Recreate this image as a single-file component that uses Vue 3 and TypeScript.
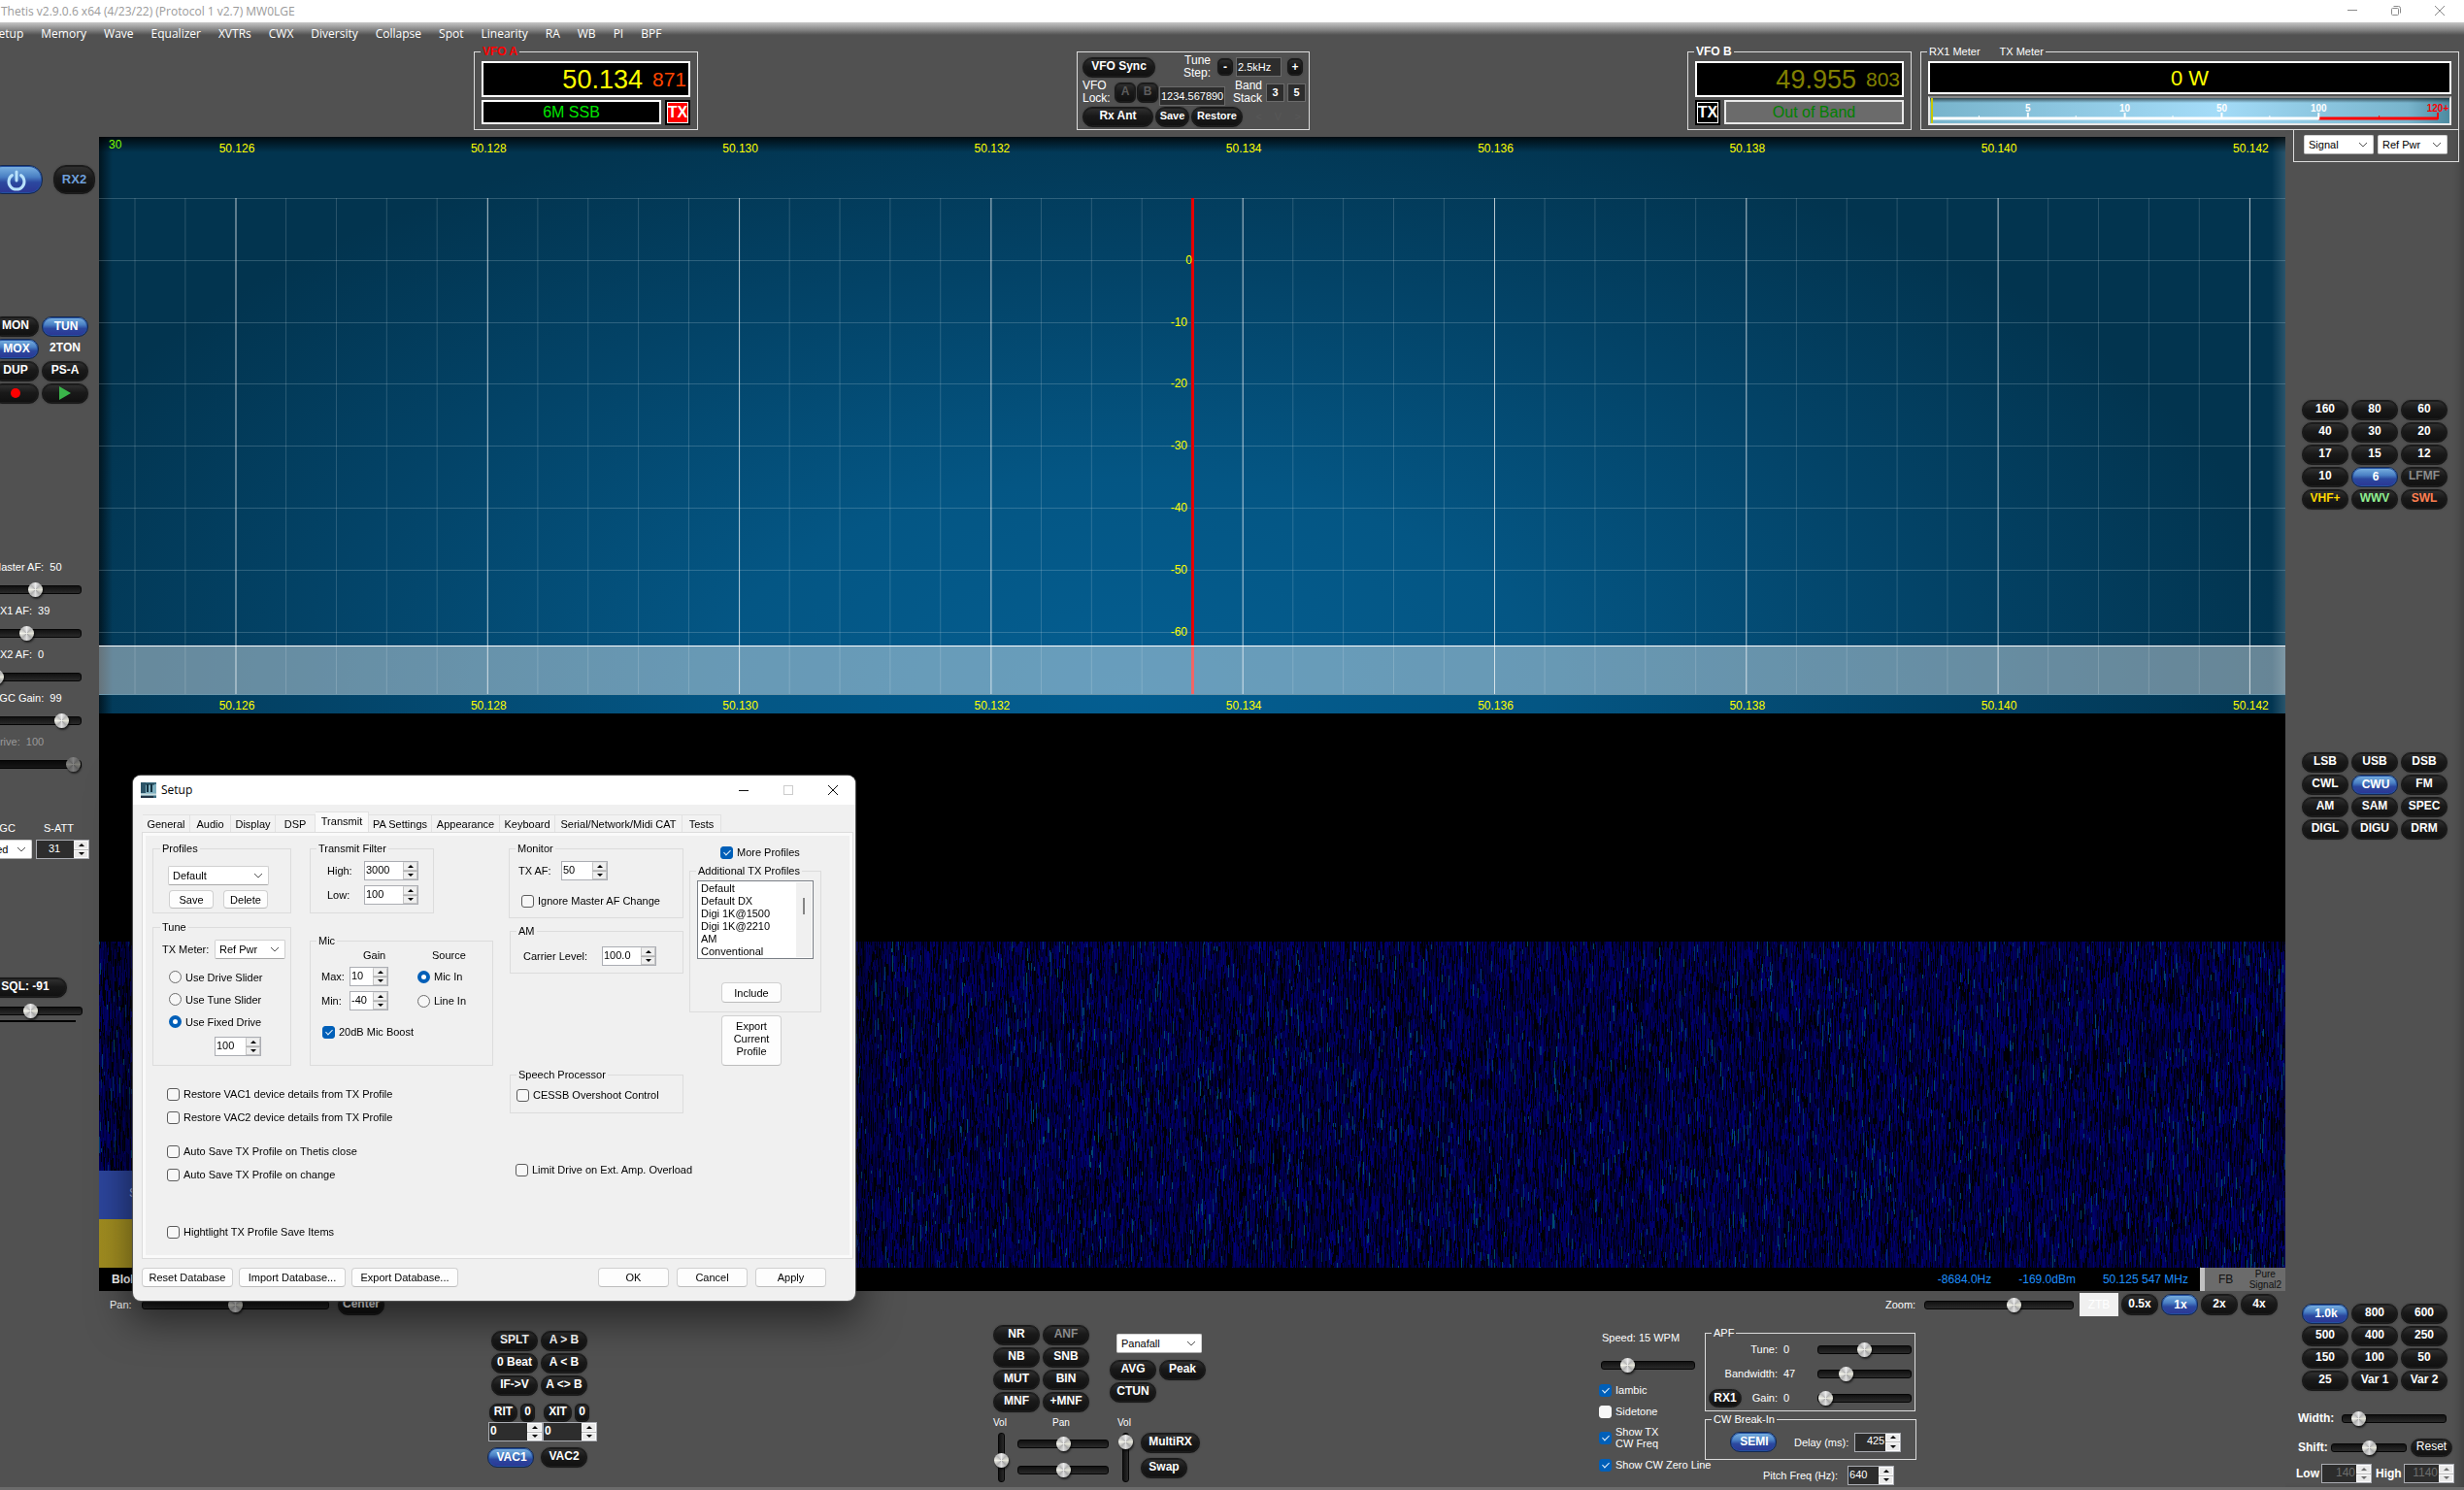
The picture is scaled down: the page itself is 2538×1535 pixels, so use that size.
<script setup lang="ts">
import { h, onMounted, ref } from 'vue'

interface SpinProps { value: string; label: string; off?: boolean }
interface ComboProps { value: string; label: string }
interface Key { t: string; c?: string }

const arrow = (d: string) =>
  h('svg', { viewBox: '0 0 8 5', width: 8, height: 5 }, [h('path', { d, fill: 'currentColor' })])

/* Numeric box with up and down buttons */
const Spin = (p: SpinProps) =>
  h('span', { class: ['spin', { off: p.off }] }, [
    h('input', { type: 'text', value: p.value, 'aria-label': p.label, disabled: p.off }),
    h('span', { class: 'ud' }, [
      h('button', { type: 'button', 'aria-label': p.label + ' up' }, [arrow('M1 4h6L4 1z')]),
      h('button', { type: 'button', 'aria-label': p.label + ' down' }, [arrow('M1 1h6L4 4z')]),
    ]),
  ])
Spin.props = { value: String, label: String, off: Boolean }

/* Drop-down with a thin chevron */
const Combo = (p: ComboProps) =>
  h('span', { class: 'combo' }, [
    h('select', { 'aria-label': p.label }, [h('option', p.value)]),
    h('svg', { viewBox: '0 0 10 6', width: 10, height: 6 }, [
      h('path', { d: 'M1 1l4 4 4-4', fill: 'none', stroke: '#555', 'stroke-width': 1 }),
    ]),
  ])
Combo.props = { value: String, label: String }

const menu = ['Setup', 'Memory', 'Wave', 'Equalizer', 'XVTRs', 'CWX', 'Diversity', 'Collapse', 'Spot', 'Linearity', 'RA', 'WB', 'PI', 'BPF']
const k = (...t: string[]): Key[] => t.map((s) => { const [a, c] = s.split('|'); return { t: a, c } })
const bands = k('160', '80', '60', '40', '30', '20', '17', '15', '12', '10', '6|on', 'LFMF|dim', 'VHF+|gold', 'WWV|green', 'SWL|coral')
const modes = k('LSB', 'USB', 'DSB', 'CWL', 'CWU|on', 'FM', 'AM', 'SAM', 'SPEC', 'DIGL', 'DIGU', 'DRM')
const filters = k('1.0k|on', '800', '600', '500', '400', '250', '150', '100', '50', '25', 'Var 1', 'Var 2')
const dsp = k('NR', 'ANF|dim', 'NB', 'SNB', 'MUT', 'BIN', 'MNF', '+MNF')
const vfoKeys = k('SPLT', 'A > B', '0 Beat', 'A < B', 'IF->V', 'A <> B')
const zooms = k('0.5x', '1x|on', '2x', '4x')

const gains = [
  { t: 'Master AF:  50', v: 50 },
  { t: 'RX1 AF:  39', v: 39 },
  { t: 'RX2 AF:  0', v: 0 },
  { t: 'AGC Gain:  99', v: 85 },
  { t: 'Drive:  100', v: 100, off: true },
]

const tabs = [
  { t: 'General', w: 49 }, { t: 'Audio', w: 42 }, { t: 'Display', w: 46 }, { t: 'DSP', w: 41 },
  { t: 'Transmit', w: 55 }, { t: 'PA Settings', w: 65 }, { t: 'Appearance', w: 70 },
  { t: 'Keyboard', w: 57 }, { t: 'Serial/Network/Midi CAT', w: 131 }, { t: 'Tests', w: 40 },
]
const profiles = ['Default', 'Default DX', 'Digi 1K@1500', 'Digi 1K@2210', 'AM', 'Conventional']

/* Horizontal positions as shares of the display's width */
const span = 2252
const pct = (x: number) => (x / span) * 100 + '%'
const majors = Array.from({ length: 9 }, (_, i) => ({ x: 141 + i * 259.3, t: (50.126 + i * 0.002).toFixed(3) }))
const minors = Array.from({ length: 44 }, (_, i) => 37 + i * 51.86).filter((_, i) => (i - 2) % 5 !== 0)
const rows = Array.from({ length: 8 }, (_, i) => 63 + Math.round(i * 63.8))
const levels = [
  { t: '0', x: 1126 }, { t: '-10', x: 1121 }, { t: '-20', x: 1121 }, { t: '-30', x: 1121 },
  { t: '-40', x: 1121 }, { t: '-50', x: 1121 }, { t: '-60', x: 1121 },
]

const meter = [
  { x: 101, t: '5' }, { x: 201, t: '10' }, { x: 301, t: '50' }, { x: 401, t: '100' },
]

const fall = ref<HTMLCanvasElement | null>(null)
const list = ref<HTMLSelectElement | null>(null)

/* Small seeded generator, so the noise floor is the same at each load */
function generator(seed: number) {
  let a = seed
  return () => {
    a = (a + 0x6d2b79f5) | 0
    let t = Math.imul(a ^ (a >>> 15), 1 | a)
    t = (t + Math.imul(t ^ (t >>> 7), 61 | t)) ^ t
    return ((t ^ (t >>> 14)) >>> 0) / 4294967296
  }
}

onMounted(() => {
  if (list.value) list.value.selectedIndex = -1
  const c = fall.value
  if (!c) return
  c.width = c.clientWidth
  c.height = c.clientHeight
  const g = c.getContext('2d')
  if (!g) return
  const rnd = generator(7)
  for (let x = 0; x < c.width; x++) {
    let y = -Math.floor(rnd() * 12)
    while (y < c.height) {
      const len = 3 + Math.floor(rnd() * 15)
      const r = rnd()
      if (r < 0.24) g.fillStyle = '#000006'
      else if (r < 0.965) g.fillStyle = `rgb(0,0,${Math.floor(36 + rnd() * 82)})`
      else g.fillStyle = `rgb(0,${Math.floor(34 + rnd() * 46)},${Math.floor(95 + rnd() * 30)})`
      g.fillRect(x, y, 1, len)
      y += len
    }
  }
})
</script>

<template>
  <div class="app">
    <header class="title">
      <span>Thetis v2.9.0.6 x64 (4/23/22) (Protocol 1 v2.7) MW0LGE</span>
      <div class="winbtns">
        <button type="button" aria-label="Minimize"><svg width="12" height="12"><path d="M1 5.500h10" /></svg></button>
        <button type="button" aria-label="Restore"><svg width="12" height="12"><rect x="1.500" y="3.500" width="7" height="7" rx="1" /><path d="M3.500 1.500h5a2 2 0 0 1 2 2v5" /></svg></button>
        <button type="button" aria-label="Close"><svg width="12" height="12"><path d="M1 1l10 10M11 1L1 11" /></svg></button>
      </div>
    </header>

    <nav class="menu"><a v-for="m in menu" :key="m" href="#">{{ m }}</a></nav>

    <div class="top">
      <i class="s1"></i>
      <fieldset class="vfo">
        <legend class="red">VFO A</legend>
        <div class="lcd"><b class="mhz yellow">50.134</b><b class="hz orange">871</b></div>
        <div class="sub"><div class="band">6M SSB</div><button type="button" class="tx hot">TX</button></div>
      </fieldset>
      <i class="s2"></i>
      <div class="sync">
        <div class="row">
          <button type="button" class="pill w75">VFO Sync</button>
          <span class="two right-t">Tune<br>Step:</span>
          <button type="button" class="pill small" aria-label="Step down">-</button>
          <input class="dark step" type="text" value="2.5kHz" aria-label="Tune step">
          <button type="button" class="pill small" aria-label="Step up">+</button>
        </div>
        <div class="row mid">
          <span class="two">VFO<br>Lock:</span>
          <button type="button" class="pill lock">A</button><button type="button" class="pill lock">B</button>
          <input class="dark freq" type="text" value="1234.567890" aria-label="Saved frequency">
          <span class="two right-t stack">Band<br>Stack</span>
          <button type="button" class="dark num">3</button><button type="button" class="dark num">5</button>
        </div>
        <div class="row low">
          <button type="button" class="pill w73">Rx Ant</button>
          <button type="button" class="pill w35 f11">Save</button>
          <button type="button" class="pill w53 f11">Restore</button>
          <span class="ghost">&lt;</span><span class="ghost">V</span><span class="ghost">&gt;</span>
        </div>
      </div>
      <i class="s3"></i>
      <fieldset class="vfo">
        <legend>VFO B</legend>
        <div class="lcd"><b class="mhz olive">49.955</b><b class="hz olive">803</b></div>
        <div class="sub"><button type="button" class="tx">TX</button><div class="band out">Out of Band</div></div>
      </fieldset>
      <fieldset class="meter">
        <legend><span>RX1 Meter</span><span>TX Meter</span></legend>
        <div class="watt">0 W</div>
        <div class="scale">
          <svg width="100%" height="26" viewBox="0 0 536 26" preserveAspectRatio="none">
            <path d="M2 0v26" stroke="#c8c800" stroke-width="2" />
            <path d="M3 21h399" stroke="#fff" stroke-width="3" />
            <path d="M401 21h123" stroke="#f00" stroke-width="3" />
            <path d="M101 15v7M201 15v7M301 15v7M401 15v7" stroke="#fff" stroke-width="2" />
            <path d="M50.500 18v4M150.500 18v4M250.500 18v4M350.500 18v4" stroke="#fff" />
            <path d="M524 15v7" stroke="#f00" stroke-width="2" /><path d="M463.500 18v4" stroke="#f00" />
            <text v-for="m in meter" :key="m.t" :x="m.x" y="14" fill="#fff">{{ m.t }}</text>
            <text x="524" y="14" fill="#f00">120+</text>
          </svg>
        </div>
      </fieldset>
    </div>

    <main class="main">
      <aside class="left">
        <div class="power">
          <button type="button" class="pill on pw" aria-label="Power">
            <svg width="24" height="24" viewBox="0 0 24 24" fill="none" stroke="#b9e2fb" stroke-width="3" stroke-linecap="round"><path d="M12 3v9" /><path d="M7.500 6.500a8 8 0 1 0 9 0" /></svg>
          </button>
          <button type="button" class="pill rx2">RX2</button>
        </div>
        <div class="grid2 tx-keys">
          <button type="button" class="pill">MON</button><button type="button" class="pill on">TUN</button>
          <button type="button" class="pill on">MOX</button><button type="button" class="pill bare">2TON</button>
          <button type="button" class="pill">DUP</button><button type="button" class="pill">PS-A</button>
          <button type="button" class="pill" aria-label="Record"><svg width="12" height="12"><circle cx="6" cy="6" r="5" fill="#f00" /></svg></button>
          <button type="button" class="pill" aria-label="Play"><svg width="14" height="14"><path d="M1 0l12 7-12 7z" fill="#3ab54a" /></svg></button>
        </div>
        <label v-for="g in gains" :key="g.t" class="gain" :class="{ off: g.off }">
          <span>{{ g.t }}</span><input type="range" class="rng" step="any" :value="g.v">
        </label>
        <div class="att">
          <div class="agc"><span>AGC</span><Combo value="Med" label="AGC" /></div>
          <div class="satt"><span>S-ATT</span><Spin value="31" label="S-ATT" class="night mid31" /></div>
        </div>
        <button type="button" class="pill sql">SQL: -91</button>
        <input type="range" class="rng sqlr" step="any" value="44" aria-label="Squelch">
        <div class="bar"></div>
      </aside>

      <section class="center">
        <div class="pan">
          <svg width="100%" height="594">
            <line v-for="x in minors" :key="x" :x1="pct(x)" :x2="pct(x)" y1="63" y2="574" stroke="#fff" stroke-opacity=".17" />
            <line v-for="y in rows" :key="y" x1="0" x2="100%" :y1="y + 0.5" :y2="y + 0.5" stroke="#c8e0ea" stroke-opacity=".22" />
            <line v-for="m in majors" :key="m.t" :x1="pct(m.x)" :x2="pct(m.x)" y1="63" y2="574" stroke="#fff" stroke-opacity=".72" />
            <line :x1="pct(1126.5)" :x2="pct(1126.5)" y1="63" y2="574" stroke="#e60000" stroke-width="3" />
            <rect x="0" y="524" width="100%" height="50" fill="#fff" fill-opacity=".4" />
            <line x1="0" x2="100%" y1="524.5" y2="524.5" stroke="#fff" />
            <line x1="0" x2="100%" y1="574.5" y2="574.5" stroke="#6c96ab" />
            <text v-for="m in majors" :key="m.t" :x="pct(m.x + 1)" y="16" text-anchor="middle">{{ m.t }}</text>
            <text v-for="m in majors" :key="m.t" :x="pct(m.x + 1)" y="590" text-anchor="middle">{{ m.t }}</text>
            <text v-for="(l, i) in levels" :key="l.t" :x="pct(l.x)" :y="rows[i + 1] + 4" text-anchor="end">{{ l.t }}</text>
            <text x="10" y="12" class="thirty">30</text>
          </svg>
        </div>
        <div class="falls">
          <canvas ref="fall"></canvas>
          <div class="spots"><div class="blue">S9</div><div class="gold-b"></div></div>
        </div>
        <div class="status">
          <b>Blobs</b>
          <span class="read">-8684.0Hz</span><span class="read">-169.0dBm</span><span class="read">50.125 547 MHz</span>
          <div class="fb"><span>FB</span><span class="pure">Pure<br>Signal2</span></div>
        </div>
        <div class="zoomrow">
          <label class="lab"><span class="pl">Pan:</span><input type="range" class="rng panr" step="any" value="50"></label>
          <button type="button" class="pill ctr">Center</button>
          <label class="lab zl"><span class="zt">Zoom:</span><input type="range" class="rng zr" step="any" value="61"></label>
          <button type="button" class="ztb">ZTB</button>
          <div class="zkeys"><button v-for="z in zooms" :key="z.t" type="button" class="pill" :class="z.c">{{ z.t }}</button></div>
        </div>

        <div class="ctl">
          <i class="c1"></i>
          <div class="ga">
            <div class="grid2"><button v-for="b in vfoKeys" :key="b.t" type="button" class="pill">{{ b.t }}</button></div>
            <div class="rit">
              <button type="button" class="pill r29">RIT</button><button type="button" class="pill r15">0</button>
              <button type="button" class="pill r29 xit">XIT</button><button type="button" class="pill r15">0</button>
            </div>
            <div class="spins"><Spin value="0" label="RIT" class="night bold" /><Spin value="0" label="XIT" class="night bold" /></div>
            <div class="vac"><button type="button" class="pill on">VAC1</button><button type="button" class="pill">VAC2</button></div>
          </div>
          <i class="c2"></i>
          <div class="gb">
            <div class="gb1">
              <div class="grid2"><button v-for="b in dsp" :key="b.t" type="button" class="pill" :class="b.c">{{ b.t }}</button></div>
              <div class="gb2">
                <Combo value="Panafall" label="Display mode" class="panaf" />
                <div class="grid2"><button type="button" class="pill">AVG</button><button type="button" class="pill">Peak</button><button type="button" class="pill">CTUN</button></div>
              </div>
            </div>
            <div class="mix">
              <label class="vcol"><span>Vol</span><input type="range" class="vr" step="any" value="42"></label>
              <div class="hcol"><span>Pan</span><input type="range" class="rng" step="any" value="50" aria-label="Pan main"><input type="range" class="rng" step="any" value="50" aria-label="Pan sub"></div>
              <label class="vcol"><span>Vol</span><input type="range" class="vr" step="any" value="96"></label>
              <div class="mkeys"><button type="button" class="pill w61">MultiRX</button><button type="button" class="pill w48">Swap</button></div>
            </div>
          </div>
          <i class="c3"></i>
          <div class="gc">
            <div class="cw">
              <label class="speed"><span>Speed:  15 WPM</span><input type="range" class="rng" step="any" value="24"></label>
              <label class="chk ia"><input type="checkbox" checked>Iambic</label>
              <label class="chk si"><input type="checkbox">Sidetone</label>
              <label class="chk st"><input type="checkbox" checked><span>Show TX<br>CW Freq</span></label>
              <label class="chk sz"><input type="checkbox" checked>Show CW Zero Line</label>
            </div>
            <div class="cwr">
              <fieldset class="apf">
                <legend>APF</legend>
                <label class="ar"><span class="al">Tune:</span><span class="av">0</span><input type="range" class="rng" step="any" value="50"></label>
                <label class="ar"><span class="al">Bandwidth:</span><span class="av">47</span><input type="range" class="rng" step="any" value="26"></label>
                <div class="ar"><span class="al gainl"><button type="button" class="pill rx1">RX1</button>Gain:</span><span class="av">0</span><input type="range" class="rng" step="any" value="0" aria-label="Gain"></div>
              </fieldset>
              <fieldset class="brk">
                <legend>CW Break-In</legend>
                <div class="br"><button type="button" class="pill on semi">SEMI</button><span class="dly">Delay (ms):</span><Spin value="425" label="Delay" class="night rt" /></div>
              </fieldset>
              <div class="pitch"><span>Pitch Freq (Hz):</span><Spin value="640" label="Pitch" class="night" /></div>
            </div>
          </div>
          <i class="c4"></i>
        </div>
      </section>

      <aside class="right">
        <div class="selbox"><Combo value="Signal" label="RX meter" /><Combo value="Ref Pwr" label="TX meter" /></div>
        <div class="grid3 bands"><button v-for="b in bands" :key="b.t" type="button" class="pill" :class="b.c">{{ b.t }}</button></div>
        <div class="grid3 modes"><button v-for="b in modes" :key="b.t" type="button" class="pill" :class="b.c">{{ b.t }}</button></div>
        <div class="grid3 filters"><button v-for="b in filters" :key="b.t" type="button" class="pill" :class="b.c">{{ b.t }}</button></div>
        <label class="wrow"><b>Width:</b><input type="range" class="rng" step="any" value="10"></label>
        <div class="srow"><b>Shift:</b><input type="range" class="rng" step="any" value="50" aria-label="Shift"><button type="button" class="pill reset">Reset</button></div>
        <div class="lrow"><b>Low</b><Spin value="140" label="Low" off class="night rt" /><b class="hi">High</b><Spin value="1140" label="High" off class="night rt" /></div>
      </aside>
    </main>
    <footer class="foot"></footer>

    <section class="dlg" role="dialog" aria-label="Setup">
      <div class="dt">
        <svg class="dicon" width="16" height="16" viewBox="0 0 16 16"><rect width="16" height="16" fill="#3c6c80" /><rect y="2" width="16" height="10" fill="#7fb0c0" /><path d="M0 0h5v11H0z" fill="#2c5468" /><path d="M7 2v8M11 2v8" stroke="#12303f" stroke-width="2" /><path d="M5 2h9" stroke="#12303f" /><path d="M0 12.500h16" stroke="#c9dde0" stroke-width="2" /><path d="M0 15h13" stroke="#234" stroke-width="2" /></svg>
        <span>Setup</span>
        <div class="dbtns">
          <button type="button" aria-label="Minimize"><svg width="12" height="12"><path d="M1 6.500h10" stroke="#111" /></svg></button>
          <button type="button" aria-label="Maximize"><svg width="12" height="12"><rect x="1.500" y="1.500" width="9" height="9" stroke="#ccc" fill="none" /></svg></button>
          <button type="button" aria-label="Close"><svg width="12" height="12"><path d="M1 1l10 10M11 1L1 11" stroke="#111" /></svg></button>
        </div>
      </div>
      <div class="tabs"><button v-for="t in tabs" :key="t.t" type="button" :class="{ open: t.t === 'Transmit' }" :style="{ width: t.w + 'px' }">{{ t.t }}</button></div>
      <div class="page">
        <div class="lblock">
          <div class="cols">
            <div class="col w143">
              <fieldset class="prof">
                <legend>Profiles</legend>
                <Combo value="Default" label="Profile" class="c104" />
                <div class="pb"><button type="button" class="btn">Save</button><button type="button" class="btn">Delete</button></div>
              </fieldset>
              <fieldset class="tune">
                <legend>Tune</legend>
                <div class="tm"><span>TX Meter:</span><Combo value="Ref Pwr" label="TX Meter" class="c73" /></div>
                <div class="rads">
                  <label class="rad"><input type="radio" name="drive">Use Drive Slider</label>
                  <label class="rad"><input type="radio" name="drive">Use Tune Slider</label>
                  <label class="rad"><input type="radio" name="drive" checked>Use Fixed Drive</label>
                </div>
                <Spin value="100" label="Fixed drive" class="n48 fixed" />
              </fieldset>
            </div>
            <div class="col w189">
              <fieldset class="tf">
                <legend>Transmit Filter</legend>
                <div class="tr"><span>High:</span><Spin value="3000" label="High" class="n56" /></div>
                <div class="tr"><span>Low:</span><Spin value="100" label="Low" class="n56" /></div>
              </fieldset>
              <fieldset class="mic">
                <legend>Mic</legend>
                <div class="mg">
                  <span></span><span class="gh">Gain</span><span class="sh">Source</span>
                  <span>Max:</span><Spin value="10" label="Max" /><label class="rad"><input type="radio" name="src" checked>Mic In</label>
                  <span>Min:</span><Spin value="-40" label="Min" /><label class="rad"><input type="radio" name="src">Line In</label>
                </div>
                <label class="chk boost"><input type="checkbox" checked>20dB Mic Boost</label>
              </fieldset>
            </div>
          </div>
          <div class="opts">
            <label class="chk"><input type="checkbox">Restore VAC1 device details from TX Profile</label>
            <label class="chk"><input type="checkbox">Restore VAC2 device details from TX Profile</label>
            <label class="chk o3"><input type="checkbox">Auto Save TX Profile on Thetis close</label>
            <label class="chk"><input type="checkbox">Auto Save TX Profile on change</label>
            <label class="chk o5"><input type="checkbox">Hightlight TX Profile Save Items</label>
          </div>
        </div>
        <div class="col3">
          <fieldset class="mon">
            <legend>Monitor</legend>
            <div class="tr"><span>TX AF:</span><Spin value="50" label="TX AF" class="n48" /></div>
            <label class="chk"><input type="checkbox">Ignore Master AF Change</label>
          </fieldset>
          <fieldset class="am">
            <legend>AM</legend>
            <div class="tr"><span>Carrier Level:</span><Spin value="100.0" label="Carrier Level" class="n56" /></div>
          </fieldset>
          <fieldset class="sp">
            <legend>Speech Processor</legend>
            <label class="chk"><input type="checkbox">CESSB Overshoot Control</label>
          </fieldset>
          <label class="chk limit"><input type="checkbox">Limit Drive on Ext. Amp. Overload</label>
        </div>
        <div class="col4">
          <label class="chk more"><input type="checkbox" checked>More Profiles</label>
          <fieldset class="add">
            <legend>Additional TX Profiles</legend>
            <div class="listbox">
              <select ref="list" size="6" aria-label="Additional TX Profiles"><option v-for="p in profiles" :key="p">{{ p }}</option></select>
              <span class="sbar"><i></i></span>
            </div>
            <button type="button" class="btn inc">Include</button>
          </fieldset>
          <button type="button" class="btn exp">Export<br>Current<br>Profile</button>
        </div>
      </div>
      <div class="dfoot">
        <button type="button" class="btn b94">Reset Database</button>
        <button type="button" class="btn b110">Import Database...</button>
        <button type="button" class="btn b110">Export Database...</button>
        <div class="okc"><button type="button" class="btn">OK</button><button type="button" class="btn">Cancel</button><button type="button" class="btn">Apply</button></div>
      </div>
    </section>
  </div>
</template>

<style>
html, body { margin: 0; background: #515151; overflow: hidden; }
</style>

<style scoped>
.app {
  position: relative; display: flex; flex-direction: column; min-height: 100vh; overflow: hidden;
  background: #515151; color: #fff; font: 11px/14px "Liberation Sans", Arial, sans-serif;
}
.app *, .app :deep(*) { box-sizing: border-box; }
button, input, select { font: inherit; color: inherit; margin: 0; padding: 0; }
button { border: 0; background: none; white-space: nowrap; }
fieldset { margin: 0; padding: 0; border: 1px solid #dcdcdc; min-width: 0; }
legend { margin-left: 6px; padding: 0 2px; height: 14px; line-height: 14px; }

.title { display: flex; justify-content: space-between; align-items: center; height: 23px; background: #fff; color: #9a9a9a; font: 12px/16px "Open Sans", sans-serif; padding: 0 19px 0 1px; }
.winbtns { display: flex; gap: 33px; padding-bottom: 2px; }
.winbtns svg { display: block; fill: none; stroke: #8a8a8a; }
.menu { display: flex; gap: 18px; height: 23px; line-height: 23px; margin-left: -8px; font-family: "Open Sans", sans-serif; font-size: 12px; position: relative; }
.menu::before { content: ""; position: absolute; inset: 0 0 auto; height: 13px; background: linear-gradient(#c6c6c6, #8a8a8a 55%, #515151); width: 100vw; left: 8px; }
.menu a { color: #fff; text-decoration: none; position: relative; }

.top { display: flex; height: 88px; padding-right: 5px; }
.top i, .ctl i { flex-shrink: 1; flex-basis: 0; }
.s1 { flex-grow: 488; } .s2 { flex-grow: 390; } .s3 { flex-grow: 389; }
.vfo { width: 231px; padding: 3px 7px 0; font-weight: bold; font-size: 12px; }
.vfo legend, .meter legend { margin-left: -1px; }
.red { color: #f00; }
.lcd { display: flex; justify-content: flex-end; align-items: center; height: 37px; background: #000; border: 2px solid #fff; font-weight: normal; padding-right: 2px; }
.lcd b { font-weight: normal; }
.mhz { font-size: 27px; line-height: 32px; margin-right: 10px; } .hz { font-size: 21px; line-height: 34px; }
.yellow { color: #ff0; } .orange { color: #ff4500; } .olive { color: #808000; }
.sub { display: flex; gap: 4px; margin-top: 3px; }
.band { flex: 1; height: 25px; border: 2px solid #fff; background: #000; color: #00e600; font: 16px/21px "Liberation Sans", sans-serif; text-align: center; }
.out { background: #6b6b6b; color: #008000; border-color: #e8e8e8; }
.tx { width: 26px; height: 26px; border: 2px solid #000; background: #000; outline: 1px solid #fff; outline-offset: -3px; font: bold 16px/20px "Liberation Sans", sans-serif; text-align: center; }
.hot { background: #f00; }
.sync { width: 240px; height: 81px; margin-top: 7px; border: 1px solid #dcdcdc; padding: 3px 0 0 5px; }
.row { display: flex; height: 24px; align-items: center; }
.two { line-height: 13px; white-space: nowrap; font-size: 12px; }
.right-t { text-align: right; }
.row .right-t { width: 57px; margin-right: 7px; }
.dark { background: #2d2d2d; border: 1px solid #6b6b6b; height: 20px; padding: 0 1px; }
.sync .small { width: 16px; height: 18px; border-radius: 5px; }
.step { width: 47px; margin: 0 6px 0 3px; }
.mid { height: 28px; }
.mid .two { width: 33px; }
.sync .lock { width: 22px; border-radius: 6px; color: #5c5c5c; margin-right: 1px; }
.freq { width: 68px; margin-top: 8px; }
.mid .two.stack { width: 38px; margin-right: 4px; }
.num { width: 19px; margin-right: 3px; height: 19px; font-weight: bold; padding: 0; text-align: center; }
.low { gap: 2px; height: 22px; }
.ghost { color: #585858; width: 18px; text-align: right; }
.meter { width: 555px; margin-left: 9px; padding: 3px 7px 0; }
.meter legend { display: flex; gap: 20px; font-size: 11px; }
.watt { height: 34px; border: 2px solid #fff; background: #000; color: #ff0; font-size: 22px; line-height: 32px; text-align: center; }
.scale { height: 30px; margin-top: 2px; border: 2px solid #e8e8e8; border-top-color: #888; background: linear-gradient(#0009, transparent 5px), linear-gradient(90deg, #78b4cc, #a4dcf8 55%, #78b4cc 92%, #4c8aa0); }
.scale svg { display: block; }
.scale text { font-size: 10px; font-weight: bold; text-anchor: middle; }

.pill {
  width: 48px; height: 21px; flex: none; border-radius: 10px; border: 1px solid #191919; color: #fff; text-align: center;
  background: linear-gradient(#323232, #191919 45%, #101010); box-shadow: inset 0 0 0 1px #1c1c1c, 0 0 1px 1px #4646467a;
  font: bold 12px/17px "Liberation Sans", sans-serif; padding: 0 0 2px;
}
.pill svg { display: block; margin: 1px auto 0; }
.on { background: linear-gradient(#7db4e2, #4a80c4 40%, #2b489f 60%, #2c3593); border-color: #14284e; box-shadow: inset 0 0 0 1px #2450a0; padding: 0 0 0 2px; }
.bare { background: none; border-color: transparent; box-shadow: none; }
.dim { color: #8c8c8c; } .gold { color: #ffd700; } .green { color: #90ee90; } .coral { color: #ff7f50; }
.w75 { width: 75px; } .w73 { width: 73px; } .w35 { width: 35px; } .w53 { width: 53px; } .w61 { width: 61px; } .w48 { width: 48px; }
.f11 { font-size: 11px; }
.grid2 { display: grid; grid-template-columns: repeat(2, 48px); gap: 2px 3px; }
.grid3 { display: grid; grid-template-columns: repeat(3, 48px); gap: 2px 3px; margin-left: 17px; }

.rng { appearance: none; background: none; height: 16px; display: block; width: 96px; }
.rng::-webkit-slider-runnable-track { height: 9px; border-radius: 3px; border: 1px solid #050505; background: linear-gradient(#111, #2a2a2a); }
.rng::-webkit-slider-thumb, .vr::-webkit-slider-thumb {
  appearance: none; width: 15px; height: 15px; margin-top: -4px; border-radius: 50%; box-shadow: 1px 2px 2px #0009;
  background: conic-gradient(#ececec, #b4b4b4, #e4e4d8, #a8a8a8, #dedede, #b0b0b0, #f0f0e8, #b8b8b8, #ececec);
}
.vr { appearance: none; writing-mode: vertical-lr; direction: rtl; width: 16px; height: 51px; background: none; display: block; }
.vr::-webkit-slider-runnable-track { width: 7px; border-radius: 3px; border: 1px solid #050505; background: linear-gradient(90deg, #111, #2a2a2a); }
.vr::-webkit-slider-thumb { margin: 0 0 0 -5px; }

.app :deep(.spin) { display: flex; width: 48px; height: 20px; border: 1px solid #abadb3; background: #fff; color: #000; flex: none; }
.app :deep(.spin input) { flex: 1; width: 0; min-width: 0; border: 0; padding: 0 0 3px 1px; background: none; color: inherit; font: inherit; }
.app :deep(.ud) { display: flex; flex-direction: column; width: 15px; gap: 1px; background: #b4b4b4; }
.app :deep(.ud button) { flex: 1; padding: 0; border: 1px solid #c4c4c4; border-top-color: #e4e4e4; background: #efefef; color: #000; display: flex; align-items: center; justify-content: center; }
.app :deep(.ud svg) { flex: none; }
.app :deep(.spin.night) { background: #2d2d2d; color: #fff; }
.app :deep(.night .ud button) { border-color: #fdfdfd; background: #e9e9e9; }
.app :deep(.spin.rt input) { text-align: right; padding-right: 1px; }
.app :deep(.spin.off input), .app :deep(.spin.off button) { color: #6d6d6d; }
.app :deep(.spin.bold) { font-weight: bold; font-size: 12px; width: 56px; }
.app :deep(.spin.mid31) { width: 55px; }
.app :deep(.spin.mid31 input) { padding-left: 12px; }
.app :deep(.spin.n56) { width: 56px; }
.app :deep(.combo) { position: relative; display: block; height: 20px; flex: none; background: #fff; border: 1px solid #d0d0d0; border-bottom-color: #a8a8a8; border-radius: 2px; color: #000; }
.app :deep(.combo select) { appearance: none; width: 100%; height: 100%; border: 0; background: none; padding: 0 0 0 4px; font: inherit; color: inherit; display: block; }
.app :deep(.combo svg) { position: absolute; right: 5px; top: 6px; pointer-events: none; }

.chk, .rad { display: flex; align-items: center; height: 16px; white-space: nowrap; gap: 4px; }
.chk input { appearance: none; flex: none; width: 13px; height: 13px; border: 1px solid #5c5c5c; border-radius: 3px; background: #f7f7f7; position: relative; }
.chk input:checked { background: #005fb8; border-color: #005fb8; }
.chk input:checked::before { content: ""; position: absolute; left: 4px; top: 1px; width: 3px; height: 6px; border: solid #e8f2fa; border-width: 0 1px 1px 0; transform: rotate(45deg); }
.rad input { appearance: none; flex: none; width: 13px; height: 13px; border: 1px solid #6a6a6a; border-radius: 50%; background: #f7f7f7; }
.rad input:checked { border: 4px solid #005fb8; background: #fff; }

.main { display: flex; flex: 1; min-height: 0; }
.left { width: 102px; flex: none; padding: 36px 0 0; overflow: hidden; }
.left > * { margin-left: -12px; }
.power { display: flex; gap: 11px; }
.pw { width: 56px; height: 30px; border-radius: 14px; }
.pw svg { margin: 1px 0 0 14px; }
.rx2 { width: 43px; height: 30px; color: #6f9fd8; font-size: 13px; border-radius: 13px; }
.left .tx-keys { margin: 126px 0 161px -8px; }
.gain { display: block; height: 45px; white-space: pre; }
.gain span { display: block; margin: 0 0 8px 4px; }
.gain.off { color: #9a9a9a; }
.gain.off .rng { filter: brightness(.55); }
.att { display: flex; gap: 4px; margin-top: 44px; }
.agc { width: 45px; } .agc > span:first-child { margin-left: 4px; }
.agc .combo { margin: 5px 0 0 -6px; }
.satt > span:first-child { display: block; margin: 0 0 5px 8px; }
.left .sql { display: block; width: 81px; margin-top: 122px; padding-right: 5px; }
.sqlr { margin-top: 5px; width: 97px; }
.bar { height: 2px; width: 90px; margin-top: 2px; background: #000; }

.center { flex: 1; min-width: 0; display: flex; flex-direction: column; padding-top: 7px; }
.pan {
  height: 594px; background:
    linear-gradient(#000c, transparent 16px), linear-gradient(90deg, #0009, transparent 14px), linear-gradient(270deg, #ffffff28, transparent 14px),
    radial-gradient(ellipse 54% 105% at 47% 96%, #045e91 0, #045684 35%, #034367 70%, #02344f 100%);
}
.pan svg { display: block; }
.pan text { font-size: 12px; fill: #ff0; }
.pan .thirty { fill: #7cfc00; font-size: 12px; }
.falls { flex: 1; position: relative; background: #000; display: flex; align-items: flex-end; min-height: 400px; }
.falls canvas { width: 100%; height: 336px; display: block; }
.spots { position: absolute; left: 0; bottom: 0; width: 80px; }
.blue { height: 50px; background: #2c459c; line-height: 46px; padding-left: 31px; color: #aab8e8; font-size: 12px; }
.gold-b { height: 50px; background: linear-gradient(90deg, #a08c20, #b8a428); }
.status { display: flex; height: 24px; background: #000; align-items: center; padding-left: 13px; font-size: 12px; }
.status b { margin-right: auto; }
.read { color: #1e90ff; margin-left: 28px; white-space: nowrap; }
.fb { width: 88px; height: 24px; margin-left: 12px; border-left: 5px solid #c0c0c0; background: #6b6b6b; color: #111; display: flex; align-items: center; justify-content: space-between; padding: 0 4px 0 14px; }
.pure { font-size: 10px; line-height: 11px; text-align: center; }
.zoomrow { display: flex; align-items: center; height: 28px; padding: 0 8px 0 11px; }
.lab { display: flex; align-items: center; }
.pl { width: 33px; } .zt { width: 40px; } .panr { width: 193px; } .zr { width: 154px; }
.ctr { margin-left: 9px; } .zl { margin-left: auto; }
.ztb { width: 40px; height: 24px; margin: 0 3px 0 6px; background: #f0f0f0; color: #fff; font-size: 12px; }
.zkeys { display: flex; gap: 3px; } .zkeys .pill { width: 38px; height: 22px; }

.ctl { display: flex; height: 174px; }
.c1 { flex-grow: 400; } .c2 { flex-grow: 408; } .c3 { flex-grow: 405; } .c4 { flex-grow: 380; }
.ga { width: 113px; padding-top: 13px; }
.ga .grid2 { margin-left: 4px; }
.rit { display: flex; margin: 8px 0 0 2px; gap: 3px; }
.rit .pill { height: 19px; line-height: 15px; }
.r29 { width: 29px; border-radius: 8px; } .r15 { width: 15px; border-radius: 5px; } .xit { margin-left: 6px; }
.spins { display: flex; margin-left: 1px; }
.vac { display: flex; gap: 7px; margin-top: 6px; }
.gb { width: 219px; padding-top: 7px; }
.gb1 { display: flex; gap: 21px; }
.gb2 { padding-top: 9px; }
.panaf { width: 88px; margin: 0 0 7px 7px; }
.mix { display: flex; margin-top: 5px; font-size: 10px; line-height: 12px; }
.vcol { width: 15px; } .vcol span, .hcol span { display: block; height: 16px; }
.hcol { width: 94px; margin: 0 9px 0 10px; } .hcol span { text-align: center; padding-right: 4px; }
.hcol .rng { width: 94px; margin: 3px 0 11px; }
.mkeys { margin: 16px 0 0 9px; display: flex; flex-direction: column; gap: 5px; }
.gc { width: 327px; display: flex; }
.cw { width: 109px; padding-top: 13px; }
.speed { display: block; white-space: pre; padding-left: 2px; }
.speed span { display: block; margin: 0 0 13px 1px; }
.speed .rng { width: 97px; }
.cw .chk { height: 14px; } .cw .chk input:not(:checked) { border-color: #f7f7f7; }
.ia { margin-top: 11px; } .si { margin-top: 8px; }
.cw .st { height: 26px; margin-top: 7px; line-height: 12px; } .sz { margin-top: 8px; }
.cwr { padding-top: 8px; }
.apf { width: 217px; height: 88px; }
.ar { display: flex; align-items: center; height: 20px; margin-bottom: 5px; }
.al { width: 74px; text-align: right; } .av { width: 41px; padding-left: 6px; } .ar .rng { width: 97px; }
.gainl { display: flex; align-items: center; justify-content: space-between; padding-left: 3px; }
.rx1 { width: 34px; height: 19px; }
.brk { width: 218px; height: 49px; margin-top: 1px; }
.br { display: flex; align-items: center; padding: 6px 0 0 25px; }
.dly { margin: 0 6px 0 18px; }
.pitch { display: flex; align-items: center; gap: 10px; margin: 6px 0 0 60px; }

.right { width: 184px; flex: none; box-shadow: inset -8px 0 8px -4px #0003; }
.selbox { display: flex; gap: 4px; margin-left: 8px; width: 171px; height: 33px; border: 1px solid #dcdcdc; border-top: 0; padding: 5px 0 0 10px; }
.selbox .combo { width: 72px; }
.bands { margin-top: 245px; } .modes { margin-top: 250px; } .filters { margin-top: 478px; }
.wrow { display: flex; align-items: center; margin: 10px 0 0 13px; height: 36px; font-size: 12px; }
.wrow b { width: 45px; } .wrow .rng { width: 108px; }
.srow { display: flex; align-items: center; margin-left: 13px; height: 24px; font-size: 12px; }
.srow b { width: 34px; } .srow .rng { width: 78px; margin-right: 4px; }
.reset { width: 43px; height: 19px; font-weight: normal; line-height: 15px; }
.lrow { display: flex; align-items: center; margin: 5px 0 0 11px; font-size: 12px; }
.lrow b { width: 26px; } .lrow .hi { width: 29px; margin-left: 4px; } .lrow .spin { width: 52px; }
.foot { height: 3px; background: #6b6b6b; }

.dlg { position: absolute; left: 137px; top: 799px; width: 744px; height: 541px; border-radius: 8px; background: #f0f0f0; color: #000; box-shadow: 0 0 1px 1px #555, 0 16px 40px 4px #0008; }
.dt { display: flex; align-items: center; height: 30px; background: #fff; border-radius: 8px 8px 0 0; padding: 0 17px 0 8px; gap: 5px; font: 12px/16px "Open Sans", sans-serif; }
.dbtns { margin-left: auto; display: flex; gap: 34px; } .dbtns svg { display: block; }
.tabs { display: flex; align-items: flex-end; height: 28px; padding-left: 10px; }
.tabs button { height: 18px; border: 1px solid #e2e2e2; border-width: 1px 1px 0 0; background: #f2f2f2; text-align: center; }
.tabs .open { height: 21px; background: #fafafa; padding-bottom: 3px; }
.page { display: flex; margin: 0 2px 0 9px; height: 440px; border: 1px solid #dcdcdc; box-shadow: inset 0 0 0 3px #fafafa; padding: 9px 0 0 10px; }
.page fieldset { border-color: #dcdcdc; }
.lblock { width: 367px; }
.cols { display: flex; gap: 19px; } .w143 { width: 143px; } .w189 { width: 189px; }
.prof { height: 74px; padding: 11px 0 0 15px; }
.prof legend { margin-left: -8px; } .tune legend { margin-left: 7px; }
.c104 { width: 104px; }
.pb { display: flex; gap: 10px; margin: 5px 0 0 1px; } .pb .btn { width: 46px; height: 19px; }
.btn { background: #fdfdfd; border: 1px solid #d0d0d0; border-bottom-color: #bcbcbc; border-radius: 4px; height: 20px; line-height: 12px; text-align: center; color: #000; }
.tune { height: 150px; margin-top: 7px; padding-top: 6px; }
.tm { display: flex; align-items: center; justify-content: space-between; padding: 0 5px 0 9px; } .c73 { width: 73px; }
.rads { margin: 7px 0 4px 16px; } .rads .rad { height: 23px; }
.fixed { margin-left: 63px; }
.tf { width: 128px; height: 74px; padding-top: 6px; }
.tr { display: flex; align-items: center; margin-bottom: 5px; }
.tf .tr span:first-child { width: 38px; } .tf .tr { padding-left: 17px; }
.mic { height: 136px; margin-top: 21px; }
.mg { display: grid; grid-template-columns: 29px 70px 1fr; row-gap: 5px; padding: 1px 0 0 11px; align-items: center; }
.mg .spin { width: 40px; } .gh { padding-left: 14px; } .sh { padding-left: 15px; }
.boost { margin: 14px 0 0 12px; }
.opts { padding: 21px 0 0 15px; } .opts .chk { margin-bottom: 8px; } .opts .o3 { margin-top: 19px; } .opts .o5 { margin-top: 43px; }
.col3 { width: 180px; margin-right: 6px; }
.mon { height: 79px; padding-top: 6px; } .mon .tr { padding-left: 9px; margin-bottom: 13px; } .mon .tr span:first-child { width: 44px; } .mon .chk { margin-left: 12px; }
.am { height: 51px; margin: 6px 0 0 1px; padding-top: 9px; } .am .tr { padding-left: 13px; } .am .tr span:first-child { width: 81px; }
.sp { height: 47px; margin: 97px 0 0 1px; padding: 6px 0 0 6px; } .sp legend { margin-left: 0; }
.limit { margin: 50px 0 0 7px; }
.col4 { width: 136px; padding-top: 3px; }
.more { margin-left: 32px; }
.add { height: 153px; margin-top: 4px; padding: 3px 7px 0; } .add legend { margin-left: -1px; white-space: nowrap; }
.listbox { display: flex; width: 120px; height: 81px; border: 1px solid #7a7f86; background: #fff; padding: 1px; }
.listbox select { flex: 1; min-width: 0; height: 78px; border: 0; background: none; border-radius: 0; overflow: hidden; outline: none; }
.listbox option { padding: 0 2px; min-height: 13px; line-height: 13px; height: 13px; }
.sbar { width: 16px; background: #f0f0f0; padding: 16px 0 0 7px; }
.sbar i { display: block; width: 2px; height: 17px; background: #858585; }
.inc { display: block; width: 62px; height: 21px; margin: 24px 0 0 25px; }
.exp { width: 62px; height: 52px; margin: 3px 0 0 33px; line-height: 13px; padding-bottom: 4px; }
.dfoot { display: flex; gap: 6px; padding: 9px 30px 0 9px; } .b94 { width: 94px; } .b110 { width: 110px; }
.okc { display: flex; gap: 8px; margin-left: auto; } .okc .btn { width: 73px; }
</style>
